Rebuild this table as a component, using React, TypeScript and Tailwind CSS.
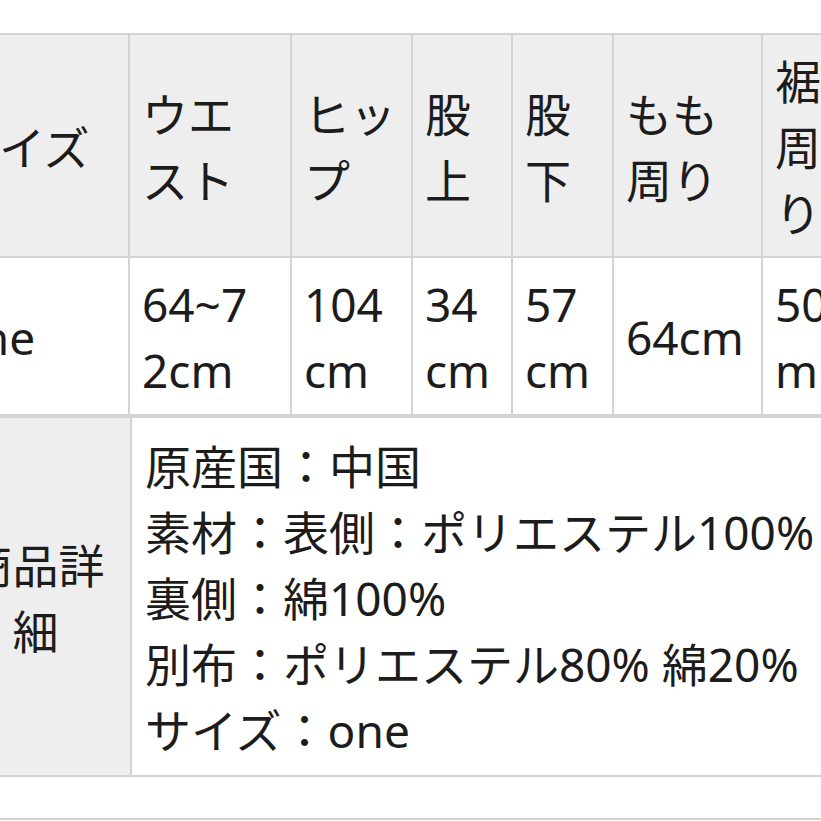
const header: string[][] = [
  ['サイズ'],
  ['ウエ', 'スト'],
  ['ヒッ', 'プ'],
  ['股', '上'],
  ['股', '下'],
  ['もも', '周り'],
  ['裾', '周', 'り'],
]

const sizes: string[][] = [
  ['one'],
  ['64~7', '2cm'],
  ['104', 'cm'],
  ['34', 'cm'],
  ['57', 'cm'],
  ['64cm'],
  ['50c', 'm'],
]

const colWidths = ['w-[189px]', 'w-[162px]', 'w-[121px]', 'w-[100px]', 'w-[101px]', 'w-[149px]', 'w-[110px]']

const details = [
  '原産国：中国',
  '素材：表側：ポリエステル100%',
  '裏側：綿100%',
  '別布：ポリエステル80% 綿20%',
  'サイズ：one',
]

function Lines({ lines }: { lines: string[] }) {
  return (
    <>
      {lines.map((l, i) => (
        <div key={i} className="whitespace-nowrap">
          {l}
        </div>
      ))}
    </>
  )
}

export default function App() {
  return (
    <div className="w-[821px] h-[821px] overflow-hidden bg-white pt-[33px] text-[46px] leading-[66px] text-[#1c1c1c] font-['Noto_Sans','Noto_Sans_CJK_JP',sans-serif]">
      <div className="ml-[-61px] w-max">
        {/* size table */}
        <table className="table-fixed border-collapse">
          <colgroup>
            {colWidths.map((w, i) => (
              <col key={i} className={w} />
            ))}
          </colgroup>
          <tbody>
            <tr className="h-[223px] bg-[#eeeeee]">
              {header.map((h, i) => (
                <th
                  key={i}
                  className="border-2 border-[#d3d3d3] px-[12px] pt-[2px] pb-0 text-left align-middle font-normal overflow-hidden"
                >
                  <Lines lines={h} />
                </th>
              ))}
            </tr>
            <tr className="h-[158px] bg-white">
              {sizes.map((s, i) => (
                <td
                  key={i}
                  className="border-2 border-[#d3d3d3] px-[12px] pt-[2px] pb-0 text-left align-middle overflow-hidden"
                >
                  <Lines lines={s} />
                </td>
              ))}
            </tr>
          </tbody>
        </table>

        {/* product details */}
        <table className="table-fixed border-collapse">
          <colgroup>
            <col className="w-[191px]" />
            <col className="w-[820px]" />
          </colgroup>
          <tbody>
            <tr className="h-[359px]">
              <th className="border-2 border-[#d3d3d3] bg-[#eeeeee] px-[13px] pt-[2px] pb-0 text-center align-middle font-normal">
                <Lines lines={['商品詳', '細']} />
              </th>
              <td className="border-2 border-[#d3d3d3] bg-white px-[13px] pt-[2px] pb-0 text-left align-middle">
                <Lines lines={details} />
              </td>
            </tr>
          </tbody>
        </table>

        <div className="mt-[41px] w-[1011px] border-t-2 border-[#d3d3d3]" />
      </div>
    </div>
  )
}
